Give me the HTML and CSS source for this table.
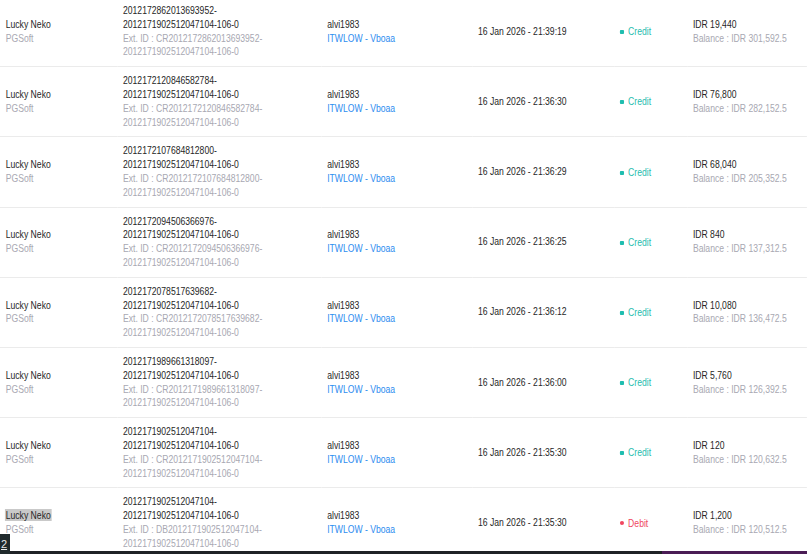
FILE: index.html
```html
<!DOCTYPE html>
<html>
<head>
<meta charset="utf-8">
<link rel="stylesheet" href="styles.css">
</head>
<body>
<div class="viewport">
<div class="page">
<table class="tx">
<colgroup>
<col class="c1"><col class="c2"><col class="c3"><col class="c4"><col class="c5"><col class="c6">
</colgroup>
<tbody>
<tr>
<td><div>Lucky Neko</div><div class="muted">PGSoft</div></td>
<td><div>2012172862013693952-</div><div>2012171902512047104-106-0</div><div class="muted">Ext. ID : CR2012172862013693952-</div><div class="muted">2012171902512047104-106-0</div></td>
<td><div>alvi1983</div><div class="link">ITWLOW - Vboaa</div></td>
<td>16 Jan 2026 - 21:39:19</td>
<td><span class="status credit"><i class="dot"></i>Credit</span></td>
<td><div>IDR 19,440</div><div class="muted">Balance : IDR 301,592.5</div></td>
</tr>
<tr>
<td><div>Lucky Neko</div><div class="muted">PGSoft</div></td>
<td><div>2012172120846582784-</div><div>2012171902512047104-106-0</div><div class="muted">Ext. ID : CR2012172120846582784-</div><div class="muted">2012171902512047104-106-0</div></td>
<td><div>alvi1983</div><div class="link">ITWLOW - Vboaa</div></td>
<td>16 Jan 2026 - 21:36:30</td>
<td><span class="status credit"><i class="dot"></i>Credit</span></td>
<td><div>IDR 76,800</div><div class="muted">Balance : IDR 282,152.5</div></td>
</tr>
<tr>
<td><div>Lucky Neko</div><div class="muted">PGSoft</div></td>
<td><div>2012172107684812800-</div><div>2012171902512047104-106-0</div><div class="muted">Ext. ID : CR2012172107684812800-</div><div class="muted">2012171902512047104-106-0</div></td>
<td><div>alvi1983</div><div class="link">ITWLOW - Vboaa</div></td>
<td>16 Jan 2026 - 21:36:29</td>
<td><span class="status credit"><i class="dot"></i>Credit</span></td>
<td><div>IDR 68,040</div><div class="muted">Balance : IDR 205,352.5</div></td>
</tr>
<tr>
<td><div>Lucky Neko</div><div class="muted">PGSoft</div></td>
<td><div>2012172094506366976-</div><div>2012171902512047104-106-0</div><div class="muted">Ext. ID : CR2012172094506366976-</div><div class="muted">2012171902512047104-106-0</div></td>
<td><div>alvi1983</div><div class="link">ITWLOW - Vboaa</div></td>
<td>16 Jan 2026 - 21:36:25</td>
<td><span class="status credit"><i class="dot"></i>Credit</span></td>
<td><div>IDR 840</div><div class="muted">Balance : IDR 137,312.5</div></td>
</tr>
<tr>
<td><div>Lucky Neko</div><div class="muted">PGSoft</div></td>
<td><div>2012172078517639682-</div><div>2012171902512047104-106-0</div><div class="muted">Ext. ID : CR2012172078517639682-</div><div class="muted">2012171902512047104-106-0</div></td>
<td><div>alvi1983</div><div class="link">ITWLOW - Vboaa</div></td>
<td>16 Jan 2026 - 21:36:12</td>
<td><span class="status credit"><i class="dot"></i>Credit</span></td>
<td><div>IDR 10,080</div><div class="muted">Balance : IDR 136,472.5</div></td>
</tr>
<tr>
<td><div>Lucky Neko</div><div class="muted">PGSoft</div></td>
<td><div>2012171989661318097-</div><div>2012171902512047104-106-0</div><div class="muted">Ext. ID : CR2012171989661318097-</div><div class="muted">2012171902512047104-106-0</div></td>
<td><div>alvi1983</div><div class="link">ITWLOW - Vboaa</div></td>
<td>16 Jan 2026 - 21:36:00</td>
<td><span class="status credit"><i class="dot"></i>Credit</span></td>
<td><div>IDR 5,760</div><div class="muted">Balance : IDR 126,392.5</div></td>
</tr>
<tr>
<td><div>Lucky Neko</div><div class="muted">PGSoft</div></td>
<td><div>2012171902512047104-</div><div>2012171902512047104-106-0</div><div class="muted">Ext. ID : CR2012171902512047104-</div><div class="muted">2012171902512047104-106-0</div></td>
<td><div>alvi1983</div><div class="link">ITWLOW - Vboaa</div></td>
<td>16 Jan 2026 - 21:35:30</td>
<td><span class="status credit"><i class="dot"></i>Credit</span></td>
<td><div>IDR 120</div><div class="muted">Balance : IDR 120,632.5</div></td>
</tr>
<tr>
<td><div><span class="sel">Lucky Neko</span></div><div class="muted">PGSoft</div></td>
<td><div>2012171902512047104-</div><div>2012171902512047104-106-0</div><div class="muted">Ext. ID : DB2012171902512047104-</div><div class="muted">2012171902512047104-106-0</div></td>
<td><div>alvi1983</div><div class="link">ITWLOW - Vboaa</div></td>
<td>16 Jan 2026 - 21:35:30</td>
<td><span class="status debit"><i class="dot"></i>Debit</span></td>
<td><div>IDR 1,200</div><div class="muted">Balance : IDR 120,512.5</div></td>
</tr>
</tbody>
</table>
</div>
</div>
<div class="dock"><span class="dock-progress"></span></div>
<div class="badge">2</div>
</body>
</html>
```
FILE: styles.css
```css
html, body {
  margin: 0;
  padding: 0;
  background: #ffffff;
  overflow: hidden;
}
body {
  font-family: "Liberation Sans", Arial, sans-serif;
  font-size: 10.5px;
  line-height: 13.8px;
  color: #262626;
  width: 807px;
  height: 554px;
}
.viewport {
  width: 807px;
  height: 554px;
  overflow: hidden;
}
/* the captured page is horizontally condensed */
.page {
  width: 984px;
  transform: scaleX(0.82);
  transform-origin: 0 0;
  margin-top: -3px;
}
.tx {
  width: 984px;
  table-layout: fixed;
  border-collapse: collapse;
}
.c1 { width: 143px; }
.c2 { width: 249px; }
.c3 { width: 184px; }
.c4 { width: 173px; }
.c5 { width: 89px; }
.c6 { width: auto; }
.tx td {
  padding: 7px 0 7px 7px;
  border-bottom: 1px solid #ebebeb;
  vertical-align: middle;
  white-space: nowrap;
  overflow: hidden;
}
.muted { color: #a8a8b2; }
.link { color: #2d8cf0; }
.status {
  display: inline-flex;
  align-items: center;
}
.dot {
  display: inline-block;
  width: 5px;
  height: 4px;
  border-radius: 1px;
  margin-right: 5px;
}
.credit { color: #1fbdaf; }
.credit .dot { background: #1fbdaf; }
.debit { color: #f0465f; }
.debit .dot { background: #f0465f; border-radius: 50%; }
.sel {
  background: #c9c9c9;
  padding: 0 1px;
  margin-left: -1px;
}
.dock {
  position: fixed;
  left: 0;
  right: 0;
  bottom: 0;
  height: 3px;
  background: #1f2226;
}
.dock-progress {
  position: absolute;
  left: 662px;
  right: 0;
  top: 0;
  bottom: 0;
  background: #4a1c55;
}
.badge {
  position: fixed;
  left: 0;
  bottom: 0;
  width: 10px;
  height: 20px;
  background: #1f2a2c;
  color: #e8e8e8;
  font-family: "Liberation Sans", Arial, sans-serif;
  font-size: 11px;
  line-height: 20px;
  text-indent: 1px;
  overflow: hidden;
  text-decoration: underline;
}
```
